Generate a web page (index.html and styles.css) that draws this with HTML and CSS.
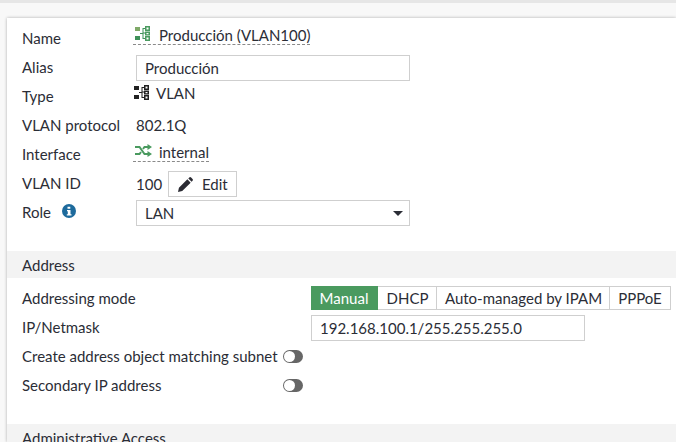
FILE: index.html
```html
<!DOCTYPE html>
<html lang="en">
<head>
<meta charset="utf-8">
<title>Edit Interface</title>
<link rel="stylesheet" href="styles.css">
</head>
<body>
<svg class="defs" width="0" height="0" aria-hidden="true">
  <symbol id="vlan" viewBox="0 0 15 15">
    <path fill="var(--b)" d="M0 1h5v4H0z"/>
    <path fill="var(--a)" d="M0 10h5v4H0z"/>
    <path fill="var(--a)" d="M5 7h2.500V2H10v1H8.500v3.500H10v1H8.500V12H10v1H7.500V8H5z"/>
    <path fill="var(--c)" fill-rule="evenodd" d="M10 0h5v5h-5zM11.500 1.500v2h2v-2zM10 5.500h5v4h-5zM11.500 7v1.200h2V7zM10 10h5v5h-5zM11.500 11.500v2h2v-2z"/>
  </symbol>
</svg>
<div class="topbar"></div>
<main class="card">
  <div class="row">
    <div class="label">Name</div>
    <div class="value up3"><span class="link"><svg class="ico green"><use href="#vlan"/></svg><span>Producción (VLAN100)</span></span></div>
  </div>
  <div class="row">
    <div class="label">Alias</div>
    <div class="value"><input class="field w274" value="Producción"></div>
  </div>
  <div class="row">
    <div class="label">Type</div>
    <div class="value up3"><svg class="ico dark"><use href="#vlan"/></svg><span class="tight">VLAN</span></div>
  </div>
  <div class="row">
    <div class="label">VLAN protocol</div>
    <div class="value up1">802.1Q</div>
  </div>
  <div class="row">
    <div class="label">Interface</div>
    <div class="value up2"><span class="link"><svg class="ico-swap" viewBox="0 0 17 13"><path d="M0 3h4.500l5 7H13M0 10h4.500l1.500-2M8 5l1.500-2H13" fill="none" stroke="#4a9a5f" stroke-width="2"/><path d="M12.500 0l4.500 3-4.500 3zM12.500 7l4.500 3-4.500 3z" fill="#4a9a5f"/></svg><span>internal</span></span></div>
  </div>
  <div class="row">
    <div class="label">VLAN ID</div>
    <div class="value"><span class="vid">100</span><button class="edit" type="button"><svg class="ico-pen" viewBox="0 0 16 16"><path d="M0 16l1-4.500L10 2.500 13.500 6l-9 9zM11 1.500l1-1a1.500 1.500 0 0 1 2 0l1.500 1.500a1.500 1.500 0 0 1 0 2l-1 1z" fill="#2b2b33"/></svg>Edit</button></div>
  </div>
  <div class="row">
    <div class="label role">Role<svg class="ico-info" viewBox="0 0 14 14"><circle cx="7" cy="7" r="7" fill="#1d6a9c"/><path d="M5.500 2.800h2.800v1.900H5.500zM5 6h3.500v4.200h1v1.300H4.800v-1.300h1V7.300H5z" fill="#fff"/></svg></div>
    <div class="value"><div class="field w274 select">LAN<span class="caret"></span></div></div>
  </div>

  <h2 class="section">Address</h2>
  <div class="row wide">
    <div class="label">Addressing mode</div>
    <div class="value">
      <div class="seg">
        <span class="opt on">Manual</span><span class="opt d">DHCP</span><span class="opt a">Auto-managed by IPAM</span><span class="opt p">PPPoE</span>
      </div>
    </div>
  </div>
  <div class="row wide">
    <div class="label">IP/Netmask</div>
    <div class="value"><input class="field w274" value="192.168.100.1/255.255.255.0"></div>
  </div>
  <div class="row toggle-row">
    <div class="label">Create address object matching subnet</div>
    <span class="toggle"></span>
  </div>
  <div class="row toggle-row">
    <div class="label">Secondary IP address</div>
    <span class="toggle"></span>
  </div>

  <h2 class="section">Administrative Access</h2>
</main>
</body>
</html>
```
FILE: styles.css
```css
* { box-sizing: border-box; }
html, body { margin: 0; height: 100%; }
body {
  height: 442px;
  overflow: hidden;
  background: #f8f8f8;
  font-family: Lato, "Open Sans", sans-serif;
  font-size: 15px;
  color: #2b2d36;
}
.defs { position: absolute; }
.topbar { height: 3px; background: #e6e6e6; margin-bottom: 15px; }
.card {
  margin-left: 7px;
  height: 424px;
  padding-top: 6px;
  background: #fff;
  box-shadow: 0 0 3px rgba(0,0,0,.3);
  overflow: hidden;
}
.row {
  display: grid;
  grid-template-columns: 114px 1fr;
  align-items: center;
  height: 29px;
  padding-left: 15px;
}
.wide { grid-template-columns: 289px 1fr; }
.toggle-row { grid-template-columns: 261px 1fr; }
.label { line-height: 18px; margin-top: -2px; }
.value { display: flex; align-items: center; line-height: 18px; }
.up1 { margin-top: -2px; }
.up3 { margin-top: -6px; }
.up2 { margin-top: -4px; }
.link {
  display: inline-flex;
  align-items: center;
  height: 19px;
  padding-left: 2px;
  margin-left: -3px;
  border-bottom: 1px dashed #8a8a8a;
}
.link span { margin-left: 9px; }
.ico { width: 15px; height: 15px; margin-top: -3px; }
.value > .ico { margin-left: -2px; }
.tight { margin-left: 7px; margin-top: -2px; }
.green { --a: #3f9159; --b: #7fa968; --c: #4a9a5f; }
.dark { --a: #222; --b: #222; --c: #222; }
.ico-swap { width: 17px; height: 13px; margin-right: -2px; margin-top: -3px; }
.field {
  display: block;
  height: 26px;
  border: 1px solid #cfcfcf;
  background: #fff;
  font: inherit;
  color: inherit;
  padding: 0 8px;
  outline: none;
  margin-top: 1px;
}
.w274 { width: 274px; }
.select {
  position: relative;
  line-height: 24px;
}
.caret {
  position: absolute;
  right: 6px;
  top: 10px;
  width: 0;
  height: 0;
  border-left: 5px solid transparent;
  border-right: 5px solid transparent;
  border-top: 5px solid #2b2d36;
}
.vid { width: 32px; }
.edit {
  display: inline-flex;
  align-items: center;
  height: 26px;
  width: 69px;
  padding: 0 0 0 9px;
  margin-top: 1px;
  border: 1px solid #cfcfcf;
  background: #fff;
  font: inherit;
  color: inherit;
}
.ico-pen { width: 15px; height: 15px; margin-right: 9px; }
.role { display: flex; align-items: center; }
.ico-info { width: 14px; height: 14px; margin-left: 11px; margin-top: -1px; }
.section {
  margin: 24px 0 6px;
  height: 27px;
  padding-left: 15px;
  background: #f3f3f3;
  font-size: 15px;
  font-weight: 400;
  line-height: 29px;
}
.seg { display: flex; margin-bottom: 1px; }
.opt {
  height: 24px;
  line-height: 22px;
  text-align: center;
  border: 1px solid #cfcfcf;
  border-left-width: 0;
  background: #fff;
}
.opt.on {
  width: 67px;
  background: #4a9a5f;
  border-color: #4a9a5f;
  color: #fff;
}
.opt.d { width: 59px; padding-left: 1px; }
.opt.a { width: 173px; padding-left: 1px; }
.opt.p { width: 61px; }
.toggle {
  position: relative;
  display: block;
  width: 20px;
  height: 13px;
  border-radius: 7px;
  background: #666;
}
.toggle::before {
  content: "";
  position: absolute;
  left: 1px;
  top: 1px;
  width: 11px;
  height: 11px;
  border-radius: 50%;
  background: #fff;
}
```
